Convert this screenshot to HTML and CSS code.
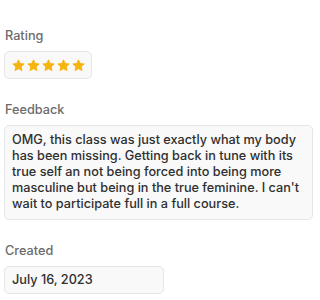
FILE: index.html
```html
<!DOCTYPE html>
<html>
<head>
<meta charset="utf-8">
<link rel="stylesheet" href="styles.css">
</head>
<body>
<div class="panel">
  <div class="field">
    <div class="label">Rating</div>
    <div class="box stars">
      <svg class="star" viewBox="0 0 24 24"><path d="M12 1.5l3.2 6.6 7.3 1-5.3 5.1 1.3 7.3L12 18l-6.5 3.5 1.3-7.3-5.3-5.1 7.3-1z" stroke-linejoin="round"/></svg>
      <svg class="star" viewBox="0 0 24 24"><path d="M12 1.5l3.2 6.6 7.3 1-5.3 5.1 1.3 7.3L12 18l-6.5 3.5 1.3-7.3-5.3-5.1 7.3-1z" stroke-linejoin="round"/></svg>
      <svg class="star" viewBox="0 0 24 24"><path d="M12 1.5l3.2 6.6 7.3 1-5.3 5.1 1.3 7.3L12 18l-6.5 3.5 1.3-7.3-5.3-5.1 7.3-1z" stroke-linejoin="round"/></svg>
      <svg class="star" viewBox="0 0 24 24"><path d="M12 1.5l3.2 6.6 7.3 1-5.3 5.1 1.3 7.3L12 18l-6.5 3.5 1.3-7.3-5.3-5.1 7.3-1z" stroke-linejoin="round"/></svg>
      <svg class="star" viewBox="0 0 24 24"><path d="M12 1.5l3.2 6.6 7.3 1-5.3 5.1 1.3 7.3L12 18l-6.5 3.5 1.3-7.3-5.3-5.1 7.3-1z" stroke-linejoin="round"/></svg>
    </div>
  </div>
  <div class="field">
    <div class="label">Feedback</div>
    <div class="box text">OMG, this class was just exactly what my body<br>has been missing. Getting back in tune with its<br>true self an not being forced into being more<br>masculine but being in the true feminine. I can't<br>wait to participate full in a full course.</div>
  </div>
  <div class="field">
    <div class="label">Created</div>
    <div class="box date">July 16, 2023</div>
  </div>
</div>
</body>
</html>
```
FILE: styles.css
```css
html, body {
  margin: 0;
  padding: 0;
  background: #ffffff;
}
body {
  font-family: Inter, "Noto Sans", sans-serif;
  -webkit-font-smoothing: antialiased;
}
.panel {
  padding: 28px 7px 0 4px;
  display: flex;
  flex-direction: column;
  gap: 23px;
}
.field {
  display: flex;
  flex-direction: column;
  align-items: flex-start;
  gap: 7px;
}
.label {
  font-size: 12.7px;
  line-height: 16px;
  font-weight: 500;
  color: #6b6b6b;
  padding-left: 1px;
}
.box {
  background: #f9f9f9;
  border: 1px solid #e6e6e6;
  border-radius: 5px;
  box-sizing: border-box;
}
.stars {
  display: flex;
  align-items: center;
  gap: 2px;
  height: 28px;
  padding: 0 6px 0 7px;
}
.star {
  width: 13px;
  height: 13px;
  fill: #f6b40e;
  stroke: #f6b40e;
  stroke-width: 1.5;
}
.text {
  align-self: stretch;
  padding: 6px 7px 7px;
  font-size: 12.7px;
  line-height: 16px;
  font-weight: 500;
  color: #2f2f2f;
  white-space: nowrap;
}
.date {
  width: 160px;
  height: 28px;
  padding: 5px 7px;
  font-size: 12.7px;
  line-height: 16px;
  font-weight: 500;
  color: #2f2f2f;
}
```
